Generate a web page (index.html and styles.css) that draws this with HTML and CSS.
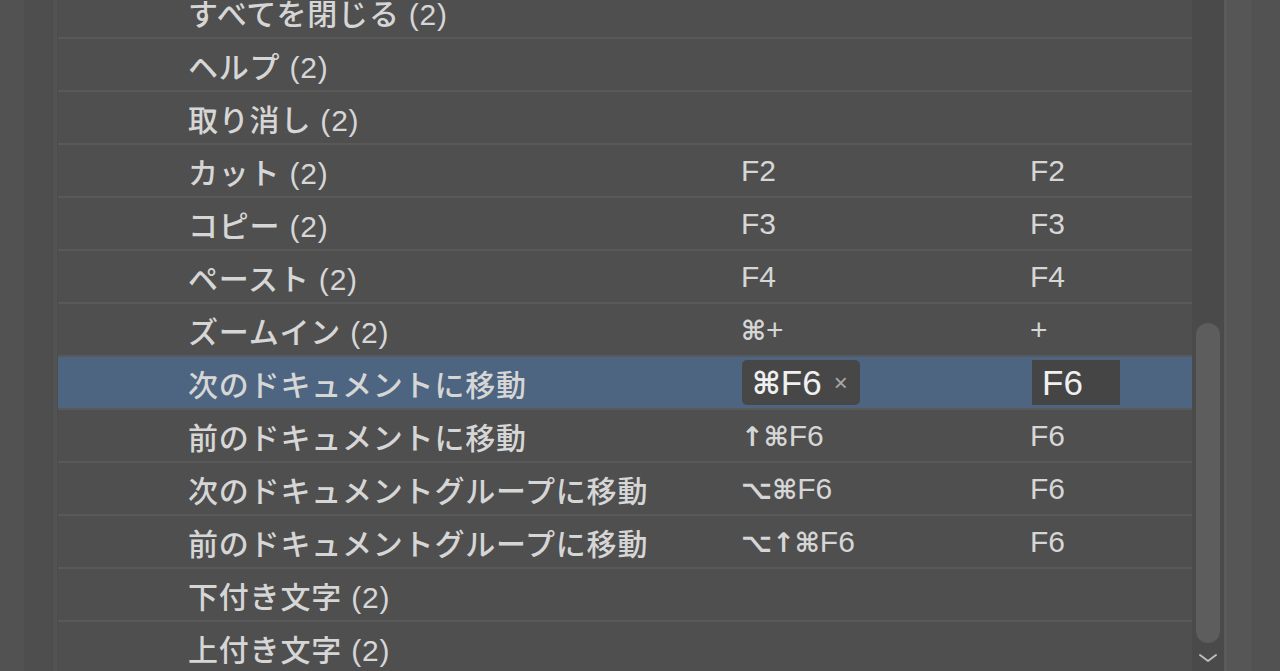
FILE: index.html
```html
<!DOCTYPE html>
<html lang="ja">
<head>
<meta charset="utf-8">
<title>キーボードショートカット</title>
<link rel="stylesheet" href="styles.css">
</head>
<body>
<div class="app">
  <div class="gutter-a"></div>
  <div class="gutter-b"></div>
  <div class="vline"></div>
  <div class="table">
    <div class="list">
      <div class="row"><span class="name">すべてを閉じる (2)</span><span class="key"></span><span class="key"></span></div>
      <div class="row"><span class="name">ヘルプ (2)</span><span class="key"></span><span class="key"></span></div>
      <div class="row"><span class="name">取り消し (2)</span><span class="key"></span><span class="key"></span></div>
      <div class="row"><span class="name">カット (2)</span><span class="key">F2</span><span class="key">F2</span></div>
      <div class="row"><span class="name">コピー (2)</span><span class="key">F3</span><span class="key">F3</span></div>
      <div class="row"><span class="name">ペースト (2)</span><span class="key">F4</span><span class="key">F4</span></div>
      <div class="row"><span class="name">ズームイン (2)</span><span class="key"><span class="sym">⌘</span>+</span><span class="key">+</span></div>
      <div class="row selected"><span class="name">次のドキュメントに移動</span><span class="key"><span class="field field-a"><span class="sym">⌘</span>F6<span class="clear">×</span></span></span><span class="key"><span class="field field-b">F6</span></span></div>
      <div class="row"><span class="name">前のドキュメントに移動</span><span class="key"><span class="sym">↑</span><span class="sym">⌘</span>F6</span><span class="key">F6</span></div>
      <div class="row"><span class="name">次のドキュメントグループに移動</span><span class="key"><span class="sym">⌥</span><span class="sym">⌘</span>F6</span><span class="key">F6</span></div>
      <div class="row"><span class="name">前のドキュメントグループに移動</span><span class="key"><span class="sym">⌥</span><span class="sym">↑</span><span class="sym">⌘</span>F6</span><span class="key">F6</span></div>
      <div class="row"><span class="name">下付き文字 (2)</span><span class="key"></span><span class="key"></span></div>
      <div class="row"><span class="name">上付き文字 (2)</span><span class="key"></span><span class="key"></span></div>
    </div>
  </div>
  <div class="track">
    <div class="thumb"></div>
    <svg class="chev" width="20" height="10" viewBox="0 0 20 10"><path d="M2 2 L10 8 L18 2" fill="none" stroke="#bdbdbd" stroke-width="2" stroke-linecap="round" stroke-linejoin="round"/></svg>
  </div>
  <div class="vline2"></div>
  <div class="panel-a"></div>
  <div class="panel-b"></div>
</div>
</body>
</html>
```

FILE: styles.css
```css
* { box-sizing: border-box; }
html, body {
  margin: 0;
  padding: 0;
  width: 1280px;
  height: 671px;
  overflow: hidden;
  background: #4f4f4f;
  font-family: "Liberation Sans", "Noto Sans CJK JP", sans-serif;
  color: #d6d6d6;
}
.app {
  display: flex;
  height: 671px;
}
.gutter-a { width: 24px; background: #525252; }
.gutter-b { width: 28px; background: #4e4e4e; }
.vline {
  width: 6px;
  background: #535353;
  border-left: 1px solid #4c4c4c;
  border-right: 1px solid #4c4c4c;
}
.table {
  width: 1134px;
  overflow: hidden;
  background: #4f4f4f;
}
.list {
  margin-top: -16px;
}
.row {
  display: grid;
  grid-template-columns: 130px 553px 289px 1fr;
  align-items: center;
  height: 53px;
  border-top: 2px solid #595959;
  font-size: 30px;
  font-weight: 500;
  letter-spacing: 0.8px;
  white-space: nowrap;
}
.row .name {
  grid-column: 2;
}
.row .key {
  font-size: 30px;
  letter-spacing: 0;
}
.sym {
  font-family: "DejaVu Sans", sans-serif;
  font-size: 27px;
  font-weight: 700;
}
.row.selected {
  background: #4d6580;
  border-top-color: #555a60;
}
.field {
  display: inline-flex;
  align-items: center;
  height: 45px;
  background: #474747;
  color: #f0f0f0;
  font-size: 35px;
}
.field .sym { font-size: 31px; }
.field-a {
  margin-left: 1px;
  padding: 0 12px 0 10px;
  border-radius: 5px;
}
.field-b {
  margin-left: 2px;
  width: 88px;
  padding-left: 10px;
  background: #454545;
}
.clear {
  font-size: 24px;
  color: #a8a8a8;
  margin-left: 12px;
  font-weight: 400;
}
.track {
  width: 32px;
  background: #4a4a4a;
  display: flex;
  flex-direction: column;
  align-items: center;
  padding-top: 323px;
}
.thumb {
  width: 24px;
  height: 320px;
  border-radius: 12px;
  background: #5d5d5d;
}
.chev {
  margin-top: 10px;
}
.vline2 { width: 3px; background: #5b5b5b; }
.panel-a { width: 25px; background: #565656; }
.panel-b { flex: 1; background: #525252; border-left: 1px solid #4f4f4f; }
```
